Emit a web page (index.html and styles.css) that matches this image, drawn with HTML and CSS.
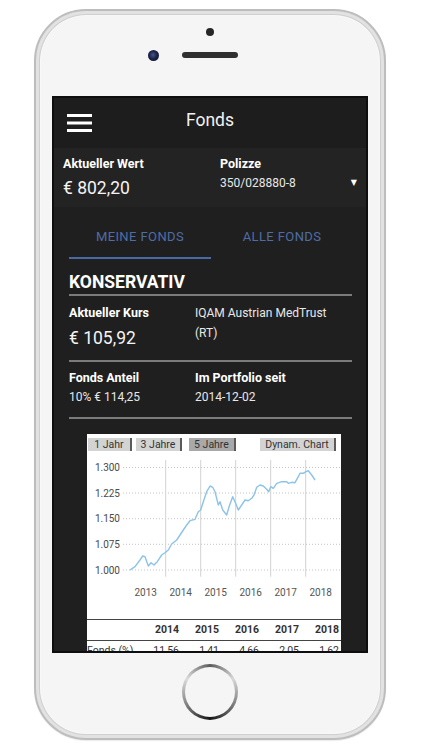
FILE: index.html
```html
<!DOCTYPE html>
<html lang="de">
<head>
<meta charset="utf-8">
<title>Fonds</title>
<link rel="stylesheet" href="styles.css">
</head>
<body>
<div class="stage">
  <div class="phone">
    <div class="phone-top">
      <div class="sensor"></div>
      <div class="speaker-row">
        <div class="camera"></div>
        <div class="speaker"></div>
        <div class="camera-spacer"></div>
      </div>
    </div>
    <div class="screen">
      <header class="appbar">
        <div class="menu">
          <svg width="25" height="18" viewBox="0 0 25 18"><rect x="0" y="0" width="25" height="3" fill="#fff"/><rect x="0" y="7.5" width="25" height="3" fill="#fff"/><rect x="0" y="15" width="25" height="3" fill="#fff"/></svg>
        </div>
        <h1 class="title">Fonds</h1>
        <div></div>
      </header>
      <section class="summary">
        <div>
          <div class="label">Aktueller Wert</div>
          <div class="big sum-big">€ 802,20</div>
        </div>
        <div>
          <div class="label">Polizze</div>
          <div class="select"><span>350/028880-8</span><span class="caret">▼</span></div>
        </div>
      </section>
      <nav class="tabs">
        <div class="tab active">MEINE FONDS</div>
        <div class="tab">ALLE FONDS</div>
      </nav>
      <main class="content">
        <h2 class="fund-title">KONSERVATIV</h2>
        <div class="detail-row row-a">
          <div>
            <div class="label dl">Aktueller Kurs</div>
            <div class="big row-big">€ 105,92</div>
          </div>
          <div class="text">IQAM Austrian MedTrust<br>(RT)</div>
        </div>
        <div class="detail-row row-b">
          <div>
            <div class="label dl">Fonds Anteil</div>
            <div class="value">10% € 114,25</div>
          </div>
          <div>
            <div class="label dl">Im Portfolio seit</div>
            <div class="value">2014-12-02</div>
          </div>
        </div>
        <div class="chart">
          <div class="chart-tools">
            <div class="btn b1">1 Jahr</div>
            <div class="btn b3">3 Jahre</div>
            <div class="btn b5 selected">5 Jahre</div>
            <div class="btn bd">Dynam. Chart</div>
          </div>
          <svg class="plot" width="254" height="165" viewBox="0 0 254 165">
            <g class="hgrid">
              <line x1="36" y1="13.5" x2="253" y2="13.5"/>
              <line x1="36" y1="39" x2="253" y2="39"/>
              <line x1="36" y1="64.7" x2="253" y2="64.7"/>
              <line x1="36" y1="90.3" x2="253" y2="90.3"/>
              <line x1="36" y1="116" x2="253" y2="116"/>
            </g>
            <g class="vgrid">
              <line x1="78.7" y1="6" x2="78.7" y2="122.7"/>
              <line x1="113.7" y1="6" x2="113.7" y2="122.7"/>
              <line x1="148.7" y1="6" x2="148.7" y2="122.7"/>
              <line x1="183.7" y1="6" x2="183.7" y2="122.7"/>
              <line x1="218.7" y1="6" x2="218.7" y2="122.7"/>
            </g>
            <g class="ylab">
              <text x="33" y="17.1">1.300</text>
              <text x="33" y="42.6">1.225</text>
              <text x="33" y="68.3">1.150</text>
              <text x="33" y="93.9">1.075</text>
              <text x="33" y="119.6">1.000</text>
            </g>
            <g class="xlab">
              <text x="58.7" y="142">2013</text>
              <text x="93.7" y="142">2014</text>
              <text x="128.7" y="142">2015</text>
              <text x="163.7" y="142">2016</text>
              <text x="198.7" y="142">2017</text>
              <text x="233.7" y="142">2018</text>
            </g>
            <polyline class="series" points="43,116 48,112.7 53,106 55.7,102 58,102.7 61.3,112 64,108.7 67,111 70.3,107.7 74.7,101 78,98.7 81.3,96 84.7,90 89.7,86 93,81 96.3,76 99.7,71 103,66.7 108,65.3 111.3,57.7 113.7,56 116.3,47.7 119.7,37.7 123,32 125.7,33.3 128,37.7 131.3,51 133,47.7 135.7,56 139.7,61 142.3,52 145.7,42.7 148,47.7 151.3,56 154.7,51 158,46 161.3,46.7 164.7,44.3 167,41 169.7,33.3 173,31 176.3,32 179.7,35.3 181.7,37.7 183.7,32.7 186.3,34.3 189.7,29.3 194.7,27.7 199.7,27.7 201.3,29.3 204.7,28.3 208,28.7 211.3,22.7 213,19.3 216.3,19.3 219,17.7 221.3,16.7 224.7,21 228,26"/>
          </svg>
          <table class="perf">
            <colgroup><col class="c0"><col class="cn"><col class="cn"><col class="cn"><col class="cn"><col class="cl"></colgroup>
            <thead>
              <tr><th></th><th>2014</th><th>2015</th><th>2016</th><th>2017</th><th>2018</th></tr>
            </thead>
            <tbody>
              <tr><td>Fonds (%)</td><td>11,56</td><td>1,41</td><td>4,66</td><td>2,05</td><td>1,62</td></tr>
            </tbody>
          </table>
        </div>
      </main>
    </div>
    <div class="phone-bottom">
      <div class="home"><div class="home-inner"></div></div>
    </div>
  </div>
</div>
</body>
</html>
```
FILE: styles.css
```css
* { box-sizing: border-box; }
html, body { margin: 0; padding: 0; }
body { background: #fff; font-family: Roboto, "Noto Sans", "Liberation Sans", sans-serif; }

.stage { width: 422px; height: 750px; padding: 9px 0 0 34px; overflow: hidden; }

.phone {
  width: 352px; height: 731px;
  border-radius: 52px;
  border: 2px solid #bdbdbd;
  background: #f5f5f5;
  box-shadow: inset 0 0 0 3px #e2e2e2, inset 0 0 0 4px #cfcfcf, inset 0 0 0 5px #f8f8f8, 0 1px 1px rgba(0,0,0,0.08);
  display: flex; flex-direction: column; align-items: center;
}
.phone-top { height: 85px; width: 100%; display: flex; flex-direction: column; align-items: center; }
.sensor { margin-top: 17px; width: 8px; height: 8px; border-radius: 50%; background: #262626; }
.speaker-row { margin-top: 13.5px; display: flex; align-items: center; gap: 23px; height: 11px; }
.camera { width: 11px; height: 11px; border-radius: 50%; background: radial-gradient(circle at 45% 45%, #45558a 0, #1c2448 45%, #0b0d1a 100%); }
.camera-spacer { width: 11px; height: 11px; }
.speaker { width: 56px; height: 5.5px; border-radius: 3px; background: #303030; }

.screen {
  width: 316px; height: 557px;
  border: 2px solid #0e0e0e;
  background: #1f1f1f;
  overflow: hidden;
  color: #fff;
  display: flex; flex-direction: column;
  flex-shrink: 0;
}

.appbar {
  height: 50px; flex-shrink: 0;
  background: #1d1d1d;
  display: grid; grid-template-columns: 1fr auto 1fr; align-items: center;
}
.menu { padding-left: 12.5px; display: flex; }
.menu svg { display: block; }
.title { margin: 0; font-size: 17.5px; font-weight: 400; line-height: 24px; padding-bottom: 6px; color: #f2f2f2; }

.summary {
  height: 59px; flex-shrink: 0;
  background: #232323;
  padding: 7px 9px 0 9px;
  display: grid; grid-template-columns: 157px 1fr;
}
.label { font-weight: 700; font-size: 12.5px; line-height: 18px; color: #fff; }
.big { font-size: 17.5px; line-height: 24px; color: #f4f4f4; }
.sum-big { margin-top: 2.7px; }
.select { display: flex; justify-content: space-between; align-items: center; font-size: 12px; line-height: 18px; margin-top: 1.3px; color: #e8e8e8; }
.caret { font-size: 8px; color: #fff; font-family: "DejaVu Sans", sans-serif; }

.tabs { height: 52px; flex-shrink: 0; margin: 0 13px 0 15px; display: grid; grid-template-columns: 1fr 1fr; }
.tab {
  height: 52px; padding-top: 9px;
  display: flex; align-items: center; justify-content: center;
  font-size: 13px; letter-spacing: 0.4px; color: #4e6da6;
  border-bottom: 2px solid transparent;
}
.tab.active { border-bottom-color: #4a69a2; }

.content { padding: 0 14px 0 15px; }
.fund-title {
  margin: 0; padding-top: 11px;
  font-size: 17.5px; line-height: 24px; font-weight: 700; color: #fff;
  border-bottom: 2px solid #7b7b7b;
}
.detail-row { display: grid; grid-template-columns: 126px 1fr; border-bottom: 2px solid #7b7b7b; }
.row-a { padding: 7px 0 10px; }
.row-b { padding: 6px 0 10px; }
.dl { line-height: 20px; }
.row-big { margin-top: 3px; }
.text { font-size: 12px; line-height: 20px; color: #e8e8e8; }
.value { font-size: 12px; line-height: 19px; color: #e8e8e8; }

.chart { margin: 15px 11px 0 18px; background: #fff; }
.chart-tools { display: flex; padding: 4px 5px 3px 1px; height: 20px; }
.btn {
  height: 13px; font-size: 10.5px; line-height: 13px;
  background: #d3d3d3; color: #333;
  border-right: 2px solid #5a5a5a;
  text-align: center; white-space: nowrap;
}
.b1 { width: 44px; }
.b3 { width: 46px; margin-left: 4px; }
.b5 { width: 47px; margin-left: 7px; }
.bd { width: 76px; margin-left: auto; }
.btn.selected { background: #a9a9a9; }

.plot { display: block; }
.hgrid line { stroke: #c4c4c4; stroke-width: 1; stroke-dasharray: 1 2; }
.vgrid line { stroke: #d2d2d2; stroke-width: 1; }
.ylab text { font-family: Roboto, sans-serif; font-size: 10px; fill: #4a4a4a; text-anchor: end; }
.xlab text { font-family: Roboto, sans-serif; font-size: 10px; fill: #555; text-anchor: middle; }
.series { fill: none; stroke: #8cc3e8; stroke-width: 1.4; stroke-linejoin: round; }

.perf { width: 100%; border-collapse: separate; border-spacing: 0; table-layout: fixed; font-size: 10.5px; color: #333; }
.c0 { width: 52px; }
.cn { width: 40px; }
.cl { width: 42px; }
.perf th {
  height: 22px; line-height: 20px; padding: 0; font-weight: 700; text-align: right;
  border-top: 1px solid #444; border-bottom: 1px solid #444;
}
.perf td { height: 20px; line-height: 20px; padding: 0; text-align: right; }
.perf th:last-child, .perf td:last-child { padding-right: 2px; }
.perf td:first-child { text-align: left; }

.phone-bottom { height: 85px; width: 100%; display: flex; justify-content: center; }
.home {
  margin-top: 11px; width: 56px; height: 56px; border-radius: 50%; padding: 3px;
  background: conic-gradient(from 0deg, #5a5a5a 0deg, #d8d8d8 60deg, #8a8a8a 110deg, #151515 180deg, #8f8f8f 250deg, #dcdcdc 300deg, #5a5a5a 360deg);
}
.home-inner { width: 100%; height: 100%; border-radius: 50%; background: #f5f5f5; }
```
